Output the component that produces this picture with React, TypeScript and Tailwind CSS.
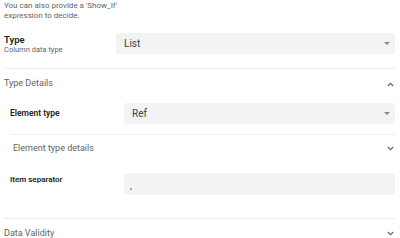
import React from 'react';

const Caret: React.FC = () => (
  <svg width="6" height="3" viewBox="0 0 6 3" className="shrink-0">
    <path d="M0 0h6L3 3z" fill="#8a8a8a" />
  </svg>
);

const Chevron: React.FC<{ up?: boolean }> = ({ up }) => (
  <svg width="7" height="5" viewBox="0 0 7 5" className="shrink-0">
    <path
      d={up ? 'M0.8 4L3.5 1.3 6.2 4' : 'M0.8 1l2.7 2.7L6.2 1'}
      fill="none"
      stroke="#5f6368"
      strokeWidth="1.1"
    />
  </svg>
);

const SelectBox: React.FC<{ value: string }> = ({ value }) => (
  <div className="flex-1 h-[21px] bg-[#f1f3f4] rounded-[3px] flex items-center justify-between pl-[8px] pr-[5px]">
    <span className="text-[10px] text-[#3c4043]">{value}</span>
    <Caret />
  </div>
);

const App: React.FC = () => {
  return (
    <div
      className="w-[400px] h-[238px] overflow-hidden bg-white pl-[4px] pr-[5px]"
      style={{ fontFamily: 'Roboto, "Noto Sans", Arial, sans-serif' }}
    >
      <p className="pt-[1px] text-[8px] leading-[10px] text-[#5f6368]">
        You can also provide a 'Show_If'
        <br />
        expression to decide.
      </p>

      <div className="flex items-start mt-[12px]">
        <div className="w-[112px] pt-[1px]">
          <div className="text-[9.5px] leading-[11px] font-semibold text-[#202124]">Type</div>
          <div className="text-[7.5px] leading-[10px] text-[#5f6368]">Column data type</div>
        </div>
        <SelectBox value="List" />
      </div>

      <div className="mt-[13px] border-t border-[#ededed]" />

      <div className="flex items-center justify-between h-[29px] pt-[1px]">
        <span className="text-[9px] text-[#5f6368]">Type Details</span>
        <span className="pr-[1px]"><Chevron up /></span>
      </div>

      <div className="pl-[6px]">
        <div className="flex items-center mt-[5px]">
          <div className="w-[114px] text-[8.5px] font-semibold text-[#202124]">Element type</div>
          <SelectBox value="Ref" />
        </div>

        <div className="mt-[10px] border-t border-[#ededed]" />

        <div className="flex items-center justify-between h-[27px] pl-[3px]">
          <span className="text-[9px] text-[#5f6368]">Element type details</span>
          <span className="pr-[1px]"><Chevron /></span>
        </div>

        <div className="flex items-start mt-[11px]">
          <div className="w-[114px] pt-[1px] text-[8px] font-semibold text-[#202124]">Item separator</div>
          <div className="flex-1 h-[22px] bg-[#f1f3f4] rounded-[3px] pl-[6px] pb-[4px] flex items-end">
            <span className="text-[9px] leading-[9px] text-[#3c4043]">,</span>
          </div>
        </div>
      </div>

      <div className="mt-[23px] border-t border-[#ededed]" />

      <div className="flex items-center justify-between h-[29px]">
        <span className="text-[9px] text-[#5f6368]">Data Validity</span>
        <span className="pr-[1px]"><Chevron /></span>
      </div>
    </div>
  );
};

export default App;
